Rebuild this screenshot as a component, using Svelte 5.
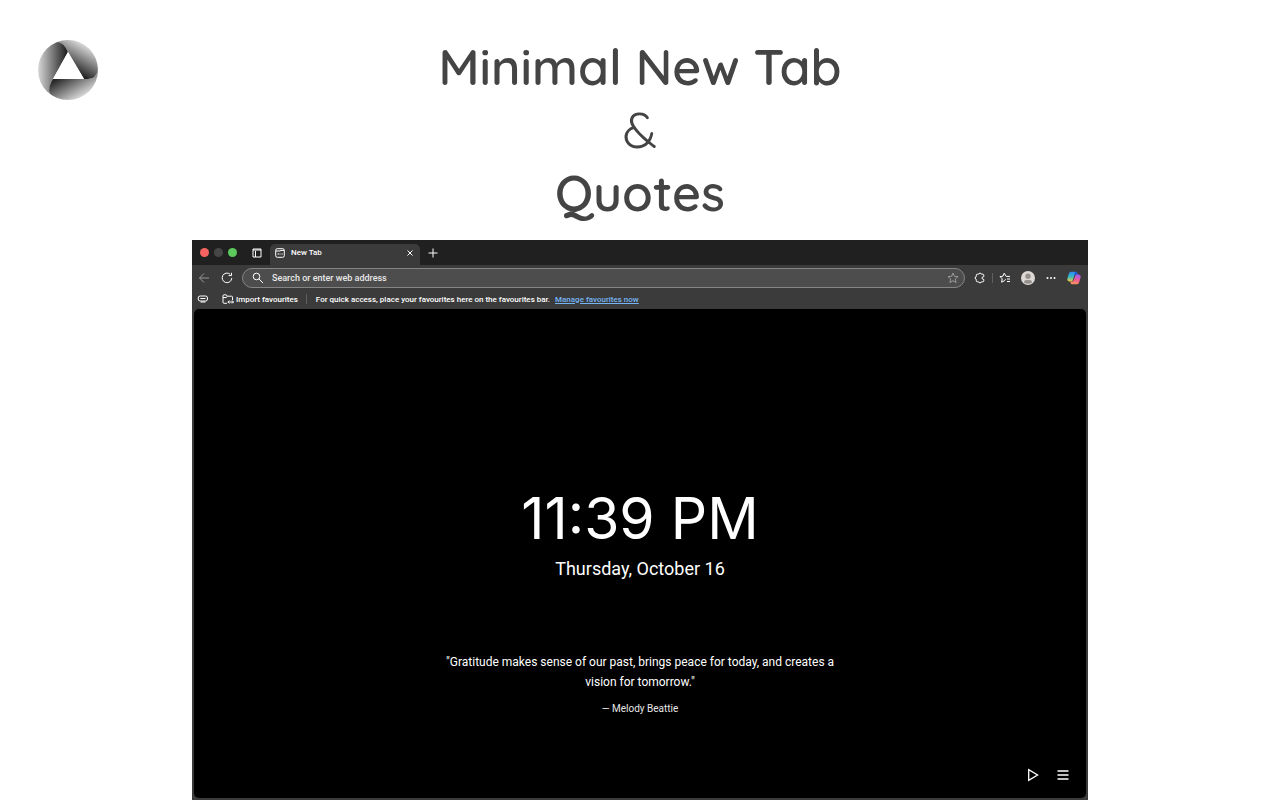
<script lang="ts">
let address = ""
const time = "11:39 PM"
const date = "Thursday, October 16"
const quote = {
  text: "Gratitude makes sense of our past, brings peace for today, and creates a vision for tomorrow.",
  author: "Melody Beattie"
}
</script>

<div class="page">
  <header>
    <svg class="logo" viewBox="0 0 60 60" role="img" aria-label="Minimal New Tab">
      <defs>
        <linearGradient id="left" gradientUnits="userSpaceOnUse" x1="0" y1="30" x2="30" y2="30">
          <stop offset="0" stop-color="#d8d8d8" />
          <stop offset="1" stop-color="#181818" />
        </linearGradient>
        <linearGradient id="right" gradientUnits="userSpaceOnUse" x1="45" y1="4" x2="30" y2="30">
          <stop offset="0" stop-color="#d8d8d8" />
          <stop offset="1" stop-color="#181818" />
        </linearGradient>
        <linearGradient id="bottom" gradientUnits="userSpaceOnUse" x1="45" y1="56" x2="30" y2="30">
          <stop offset="0" stop-color="#d8d8d8" />
          <stop offset="1" stop-color="#181818" />
        </linearGradient>
        <clipPath id="disc"><circle cx="30" cy="30" r="30" /></clipPath>
      </defs>
      <g clip-path="url(#disc)">
        <path d="M0 0H14L20 1.7Q26 2 30 12L15 39Q9 48 12 54L10 60H0Z" fill="url(#left)" />
        <path d="M14 0H60V29Q59 39 50 39H46L30 12Q26 2 18 2Z" fill="url(#right)" />
        <path d="M15 39H50Q58 39 60 29V60H18L12 54Q9 48 15 39Z" fill="url(#bottom)" />
      </g>
      <path d="M30 12L46 39H15Z" fill="#fff" />
    </svg>
    <h1>Minimal New Tab<br><span class="amp">&amp;</span><br>Quotes</h1>
  </header>

  <div class="window">
    <div class="tabs">
      <div class="lights">
        <span class="light red"></span>
        <span class="light grey"></span>
        <span class="light green"></span>
      </div>
      <button class="workspaces" aria-label="Tab actions">
        <svg width="10" height="10" viewBox="0 0 10 10"><path d="M1 2H9M1 1H9V9H1ZM3.5 3V9" /></svg>
      </button>
      <div class="tab">
        <svg width="10" height="10" viewBox="0 0 10 10"><rect x="0.7" y="0.7" width="8.6" height="8.6" rx="1.6" /><path d="M1 3H5L6 2.4H9M2.5 6H4M4.5 6H5.5M6.5 6H7.7" /></svg>
        <span class="title">New Tab</span>
        <button aria-label="Close tab">
          <svg width="8" height="8" viewBox="0 0 8 8"><path d="M1.5 1.5L6.5 6.5M6.5 1.5L1.5 6.5" /></svg>
        </button>
      </div>
      <button class="plus" aria-label="New tab">
        <svg width="10" height="10" viewBox="0 0 10 10"><path d="M5 0.5V9.5M0.5 5H9.5" /></svg>
      </button>
    </div>

    <div class="toolbar">
      <button class="back" aria-label="Back">
        <svg width="12" height="12" viewBox="0 0 12 12"><path d="M11 6H1.5M6 1.5L1.5 6L6 10.5" /></svg>
      </button>
      <button aria-label="Refresh">
        <svg width="12" height="12" viewBox="0 0 12 12"><path d="M9.2 2.3A4.8 4.8 0 1 0 10.8 6M10.5 0.8V3.6H7.6" /></svg>
      </button>
      <div class="address">
        <svg width="12" height="12" viewBox="0 0 12 12"><circle cx="4.5" cy="4.5" r="3.3" /><path d="M7 7L11 11" /></svg>
        <input type="text" aria-label="Address" placeholder="Search or enter web address" bind:value={address}>
        <button class="dim" aria-label="Add to favourites">
          <svg width="12" height="12" viewBox="0 0 12 12"><path d="M6 1L7.4 4.3L11 4.6L8.3 7L9.1 10.6L6 8.7L2.9 10.6L3.7 7L1 4.6L4.6 4.3Z" /></svg>
        </button>
      </div>
      <div class="actions">
        <button aria-label="Extensions">
          <svg width="12" height="12" viewBox="0 0 12 12"><path d="M3.3 2.2H4.6Q4.6 1.2 6 1.2T7.4 2.2H8.8Q9.8 2.2 9.8 3.2V4.6Q8 4.6 8 6T9.8 7.4V8.8Q9.8 9.8 8.8 9.8H7.4Q7.4 10.8 6 10.8T4.6 9.8H3.3Q2.3 9.8 2.3 8.8V7.4Q1.2 7.4 1.2 6T2.3 4.6V3.2Q2.3 2.2 3.3 2.2Z" /></svg>
        </button>
        <span class="line"></span>
        <button aria-label="Favourites">
          <svg width="12" height="12" viewBox="0 0 12 12"><path d="M7.2 4.4H11M8 7H11M8 9.5H11M7.2 4.4L5.2 1.2L3.9 4.2L1 4.6L3.2 6.8L2.6 10.2L5.5 8.7L6.6 7.2" /></svg>
        </button>
        <button class="profile" aria-label="Profile">
          <svg width="14" height="14" viewBox="0 0 14 14"><circle cx="7" cy="7" r="7" fill="#dcd9d6" /><circle cx="7" cy="5.2" r="2.7" fill="#96918c" /><path d="M2.8 11.5Q3 8.9 5 8.9H9Q11 8.9 11.2 11.5Q7 14.2 2.8 11.5Z" fill="#96918c" /></svg>
        </button>
        <button aria-label="Settings and more">
          <svg width="12" height="12" viewBox="0 0 12 12"><path class="dots" d="M2.5 6h0M6 6h0M9.5 6h0" /></svg>
        </button>
        <button class="copilot" aria-label="Copilot">
          <svg width="14" height="14" viewBox="0 0 14 14">
            <defs>
              <linearGradient id="blue" x1="0" y1="0" x2="0" y2="1">
                <stop offset="0" stop-color="#2f8bf0" />
                <stop offset="0.5" stop-color="#35b8c5" />
                <stop offset="1" stop-color="#f0cd35" />
              </linearGradient>
              <linearGradient id="pink" x1="0.5" y1="0" x2="0.3" y2="1">
                <stop offset="0" stop-color="#a45be8" />
                <stop offset="0.5" stop-color="#ee5a98" />
                <stop offset="1" stop-color="#ff9a55" />
              </linearGradient>
            </defs>
            <path d="M3.8 0.7H9Q10.2 0.7 10.8 3.6H8.6Q7.6 3.6 7.2 5L5.8 9.2Q5.3 10.5 4 10.5H2Q-0.2 10 0.4 7.5L1.8 2.8Q2.4 0.8 3.8 0.7Z" fill="url(#blue)" />
            <path d="M8.6 0.7H9Q10.2 0.7 10.8 3.6H8.6Q7.8 3.6 7.3 4.7Q7 2 8.6 0.7Z" fill="#1c54d5" />
            <path d="M10.2 13.3H5Q3.8 13.3 3.2 10.4H5.4Q6.4 10.4 6.8 9L8.2 4.8Q8.7 3.5 10 3.5H12Q14.2 4 13.6 6.5L12.2 11.2Q11.6 13.2 10.2 13.3Z" fill="url(#pink)" />
          </svg>
        </button>
      </div>
    </div>

    <div class="favourites">
      <svg width="12" height="10" viewBox="0 0 12 10"><rect x="1.2" y="2" width="9.3" height="5" rx="2" /><path d="M3.3 4.5H8.5M3.5 8H8.5" /></svg>
      <button class="import">
        <svg width="12" height="10" viewBox="0 0 12 10"><path d="M5 9.3H2Q1 9.3 1 8.3V1.8Q1 0.8 2 0.8H4L5.5 2.2H9.5Q10.5 2.2 10.5 3.2V6M1 3.6H4L5.5 2.2M6 8H11.5M7.3 6.5L5.8 8L7.3 9.5M10 6.5L11.5 8L10 9.5" /></svg>
        Import favourites
      </button>
      <span class="line"></span>
      <p>For quick access, place your favourites here on the favourites bar. <a href="#favourites">Manage favourites now</a></p>
    </div>

    <main>
      <time>{time}</time>
      <p class="date">{date}</p>
      <blockquote>"{quote.text}"</blockquote>
      <p class="author">— {quote.author}</p>
      <div class="controls">
        <button aria-label="Play">
          <svg width="14" height="14" viewBox="0 0 14 14"><path d="M2.7 1.6V12.4L11.6 7Z" /></svg>
        </button>
        <button aria-label="Menu">
          <svg width="14" height="14" viewBox="0 0 14 14"><path d="M1.5 3H12.5M1.5 7H12.5M1.5 11H12.5" /></svg>
        </button>
      </div>
    </main>
  </div>
</div>

<style>
:global(body) {
  margin: 0;
  background: #fff;
}
.page {
  display: flex;
  flex-direction: column;
  min-height: 100vh;
}
header {
  display: grid;
  grid-template-columns: 1fr auto 1fr;
  align-items: start;
  padding: 35px 38px 16px;
}
.logo {
  width: 60px;
  height: 60px;
  margin-top: 5px;
}
h1 {
  margin: 0;
  color: #444;
  font-family: Quicksand, Lato, sans-serif;
  font-size: 50px;
  font-weight: 600;
  line-height: 63px;
  text-align: center;
}
.amp {
  font-weight: 400;
}
.window {
  display: flex;
  flex: 1;
  flex-direction: column;
  width: 70%;
  margin: 0 auto;
  background: #3b3b3b;
  color: #fff;
  font-family: Roboto, sans-serif;
}
svg {
  display: block;
  flex: none;
  fill: none;
  stroke: currentColor;
}
.logo, .profile svg, .copilot svg {
  stroke: none;
}
button {
  display: flex;
  align-items: center;
  padding: 0;
  border: none;
  background: none;
  color: inherit;
  font: inherit;
  cursor: pointer;
}
p {
  margin: 0;
}
.tabs {
  display: flex;
  align-items: center;
  height: 25px;
  background: #202020;
}
.lights {
  display: flex;
  gap: 5px;
  margin-left: 8px;
}
.light {
  width: 9px;
  height: 9px;
  border-radius: 50%;
}
.red {
  background: #f4635f;
}
.grey {
  background: #464646;
}
.green {
  background: #5dc95c;
}
.workspaces {
  margin: 0 8px 0 15px;
}
.tab {
  display: flex;
  align-items: center;
  align-self: flex-end;
  box-sizing: border-box;
  width: 150px;
  height: 21px;
  padding: 0 6px 4px 5px;
  border-radius: 5px 5px 0 0;
  background: #3b3b3b;
}
.title {
  flex: 1;
  margin-left: 6px;
  font-size: 8px;
  font-weight: 500;
}
.plus {
  margin-left: 8px;
}
.toolbar {
  display: flex;
  align-items: center;
  gap: 11px;
  height: 26px;
  padding: 0 7px 0 6px;
}
.back, .dim {
  color: #999;
}
.address {
  display: flex;
  flex: 1;
  align-items: center;
  box-sizing: border-box;
  height: 20px;
  margin-left: -2px;
  padding: 0 5px 0 9px;
  border: 1px solid #858585;
  border-radius: 10px;
  background: #4d4d4d;
}
input {
  flex: 1;
  min-width: 0;
  margin: 0 8px;
  padding: 0;
  border: none;
  outline: none;
  background: none;
  color: #fff;
  font: 500 9px Roboto, sans-serif;
}
input::placeholder {
  color: #e8e8e8;
  opacity: 1;
}
.actions {
  display: flex;
  align-items: center;
  gap: 10px;
  margin-left: -2px;
}
.actions .line {
  margin: 0 -4px;
}
.line {
  width: 1px;
  height: 10px;
  background: #606060;
}
.dots {
  stroke-width: 2;
  stroke-linecap: round;
}
.favourites {
  display: flex;
  align-items: center;
  height: 16px;
  padding: 0 5px 2px;
  font-size: 8px;
  font-weight: 500;
  white-space: nowrap;
}
.import {
  gap: 2px;
  margin: 0 8px 0 13px;
}
.favourites p {
  margin-left: 9px;
}
a {
  margin-left: 3px;
  color: #74b5f5;
}
main {
  display: flex;
  flex: 1;
  flex-direction: column;
  align-items: center;
  margin: 0 2px 2px;
  padding: 174px 16px 16px;
  border-radius: 5px;
  background: #000;
  text-align: center;
}
time {
  font-family: Inter, sans-serif;
  font-size: 57px;
  line-height: 72px;
}
.date {
  margin-top: 1px;
  font-size: 18px;
  line-height: 26px;
}
blockquote {
  max-width: 400px;
  margin: 70px 0 0;
  font-size: 12px;
  line-height: 20px;
}
.author {
  margin-top: 9px;
  font-size: 10px;
  line-height: 16px;
  color: #e6e6e6;
}
.controls {
  display: flex;
  align-self: flex-end;
  gap: 16px;
  margin-top: auto;
}
.controls svg {
  stroke-width: 1.3;
}
</style>
